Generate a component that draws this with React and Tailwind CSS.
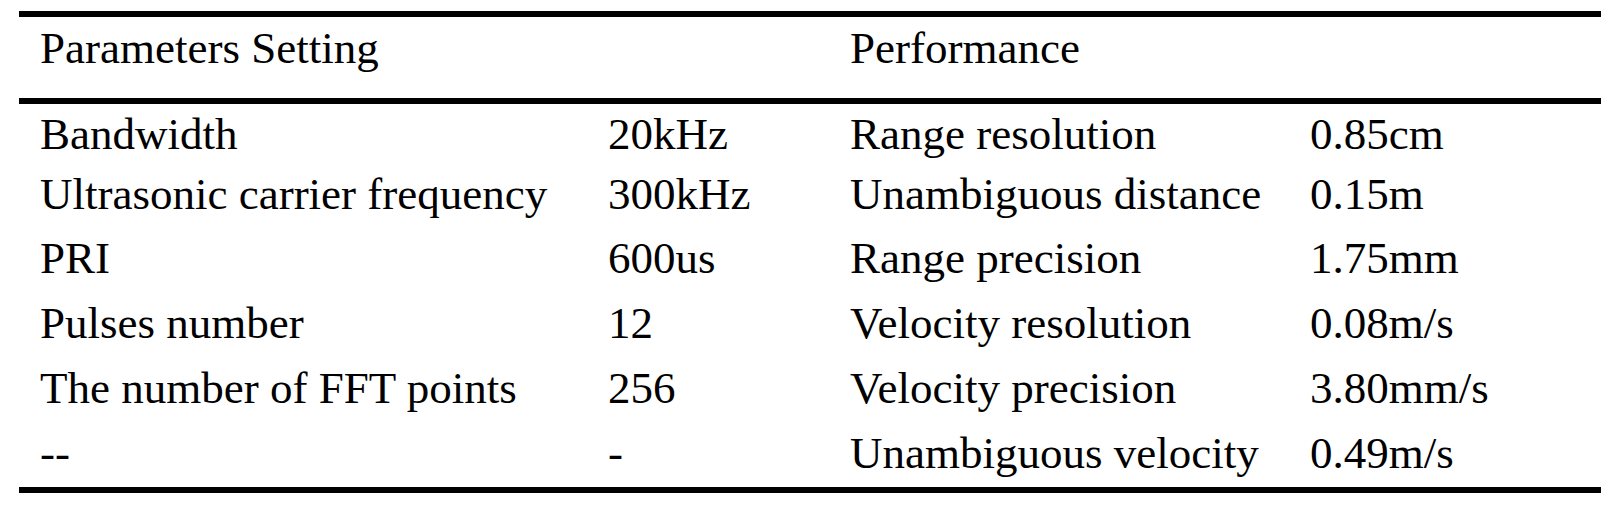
const rows = [
  { name: 'Bandwidth', value: '20kHz', metric: 'Range resolution', result: '0.85cm', cls: 'leading-[60px]' },
  { name: 'Ultrasonic carrier frequency', value: '300kHz', metric: 'Unambiguous distance', result: '0.15m', cls: 'leading-[60px]' },
  { name: 'PRI', value: '600us', metric: 'Range precision', result: '1.75mm', cls: 'leading-[65px] pt-[2px]' },
  { name: 'Pulses number', value: '12', metric: 'Velocity resolution', result: '0.08m/s', cls: 'leading-[65px]' },
  { name: 'The number of FFT points', value: '256', metric: 'Velocity precision', result: '3.80mm/s', cls: 'leading-[65px]' },
  { name: '--', value: '-', metric: 'Unambiguous velocity', result: '0.49m/s', cls: 'leading-[65px] pb-[1px]' },
];

const App = () => {
  return (
    <div className="w-[1617px] h-[512px] bg-white overflow-hidden pt-[11px] pl-[19px]">
      <table className="table-fixed border-separate border-spacing-0 w-[1582px] border-y-[6px] border-black text-black text-[45px] font-['Liberation_Serif',serif]">
        <colgroup>
          <col className="w-[589px]" />
          <col className="w-[242px]" />
          <col className="w-[460px]" />
          <col className="w-[291px]" />
        </colgroup>
        {/* Header */}
        <thead>
          <tr>
            <th colSpan={2} className="text-left font-normal whitespace-nowrap pl-[21px] leading-[62px] pb-[19px] border-b-[6px] border-black">
              Parameters Setting
            </th>
            <th colSpan={2} className="text-left font-normal whitespace-nowrap leading-[62px] pb-[19px] border-b-[6px] border-black">
              Performance
            </th>
          </tr>
        </thead>

        {/* Body */}
        <tbody>
          {rows.map((row) => (
            <tr key={row.metric}>
              <td className={`p-0 pl-[21px] whitespace-nowrap ${row.cls}`}>{row.name}</td>
              <td className={`p-0 whitespace-nowrap ${row.cls}`}>{row.value}</td>
              <td className={`p-0 whitespace-nowrap ${row.cls}`}>{row.metric}</td>
              <td className={`p-0 whitespace-nowrap ${row.cls}`}>{row.result}</td>
            </tr>
          ))}
        </tbody>
      </table>
    </div>
  );
};

export default App;
